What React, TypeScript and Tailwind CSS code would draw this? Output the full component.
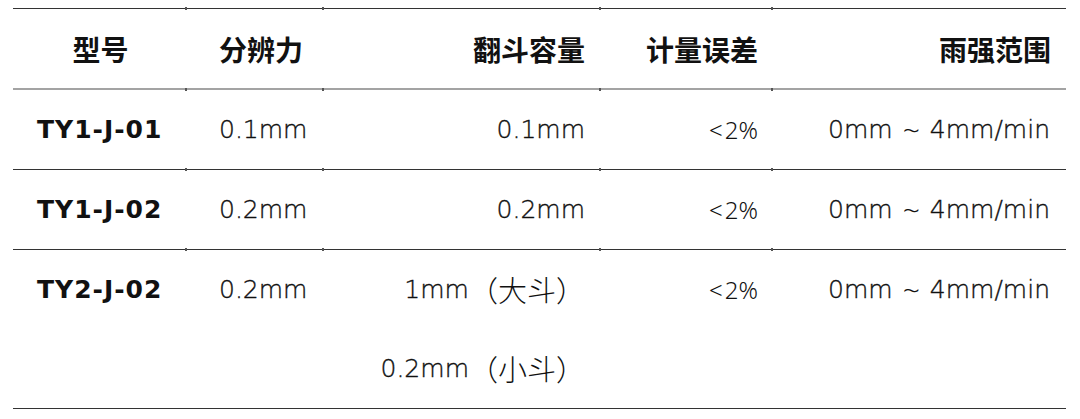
import React from "react";

const BODY = { fontFamily: '"DejaVu Sans", "Noto Sans CJK SC", sans-serif' };
const CJK = { fontFamily: '"Noto Sans CJK SC", sans-serif' };
const NARROW = { fontFamily: '"Noto Sans", "Noto Sans CJK SC", sans-serif' };

const cols = "grid grid-cols-[173px_137px_277px_172px_294px]";

type Row = {
  model: string;
  resolution: string;
  capacity: [string, string][];
  height: string;
};

const rows: Row[] = [
  { model: "TY1-J-01", resolution: "0.1mm", capacity: [["0.1mm", ""]], height: "h-[80px]" },
  { model: "TY1-J-02", resolution: "0.2mm", capacity: [["0.2mm", ""]], height: "h-[80px]" },
  {
    model: "TY2-J-02",
    resolution: "0.2mm",
    capacity: [["1mm", "（大斗）"], ["0.2mm", "（小斗）"]],
    height: "h-[159px]",
  },
];

function Tick() {
  return <span className="absolute left-[-1px] top-[-2px] h-[3px] w-[2px] bg-[#555]" />;
}

export default function App() {
  return (
    <div className="h-[419px] w-[1080px] bg-white pl-[13px] pt-[8px] text-[#111]" style={BODY}>
      <div className="w-[1053px] border-t border-[#333]">
        {/* header */}
        <div className={`${cols} h-[81px] border-b-2 border-[#a3a3a3] text-[28px] font-bold`} style={CJK}>
          <div className="flex items-center justify-center pl-[2px]">型号</div>
          <div className="relative flex items-center pl-[33px]"><Tick />分辨力</div>
          <div className="relative flex items-center justify-end pr-[15px]"><Tick />翻斗容量</div>
          <div className="relative flex items-center justify-end pr-[14px]"><Tick />计量误差</div>
          <div className="relative flex items-center justify-end pr-[15px]"><Tick />雨强范围</div>
        </div>

        {rows.map((r) => (
          <div key={r.model} className={`${cols} ${r.height} border-b border-[#333] text-[25px]`}>
            <div className="flex h-[79px] items-center pl-[24px] font-bold tracking-[1px]">{r.model}</div>
            <div className="relative flex h-[79px] items-center pl-[33px] font-extralight [-webkit-text-stroke:0.35px]">
              <Tick />
              {r.resolution}
            </div>
            <div className="relative flex flex-col items-end pr-[15px] font-extralight [-webkit-text-stroke:0.35px]">
              <Tick />
              {r.capacity.map(([num, cjk]) => (
                <div key={num} className="flex h-[79px] items-center">
                  {num}
                  {cjk && (
                    <span className="text-[29px] font-light [-webkit-text-stroke:0px]" style={CJK}>{cjk}</span>
                  )}
                </div>
              ))}
            </div>
            <div className="relative flex h-[79px] items-center justify-end pr-[14px] text-[24px] font-light" style={NARROW}>
              <Tick />
              <span className="mr-[2px]">&lt;</span>
              2%
            </div>
            <div className="relative flex h-[79px] items-center justify-end pr-[16px] font-extralight [-webkit-text-stroke:0.35px]">
              <Tick />
              0mm
              <span className="mx-[10px] text-[30px] font-light [-webkit-text-stroke:0px]" style={NARROW}>~</span>
              4mm/min
            </div>
          </div>
        ))}
      </div>
    </div>
  );
}
